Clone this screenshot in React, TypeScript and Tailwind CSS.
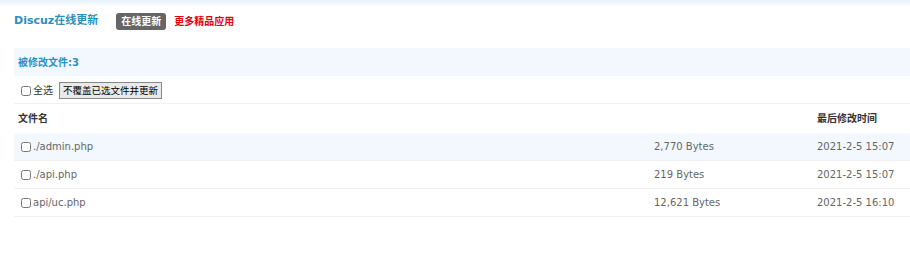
const files = [
  { name: './admin.php', size: '2,770 Bytes', time: '2021-2-5 15:07', hover: true },
  { name: './api.php', size: '219 Bytes', time: '2021-2-5 15:07', hover: false },
  { name: 'api/uc.php', size: '12,621 Bytes', time: '2021-2-5 16:10', hover: false },
];

export default function App() {
  return (
    <div
      className="h-[253px] w-[910px] overflow-hidden bg-white text-[10px] text-[#666]"
      style={{ fontFamily: '"DejaVu Sans", Verdana, "Noto Sans CJK SC", sans-serif' }}
    >
      <div className="h-[7px] bg-gradient-to-b from-[#e6f1fa] to-white" />
      <div className="flex items-center pl-[14px] pt-[6px]">
        <h3 className="text-[11px] font-bold text-[#2a8fc1]">Discuz在线更新</h3>
        <span className="ml-[18px] rounded-[3px] bg-[#666] px-[5px] py-[1px] font-bold text-white">在线更新</span>
        <a className="ml-[8px] font-bold text-[#e4000f]">更多精品应用</a>
      </div>

      <div className="ml-[14px] mt-[18px]">
        <div className="flex h-[28px] items-center bg-[#f2f8fd] pl-[4px] font-bold text-[#2a8fc1]">被修改文件:3</div>
        <div className="flex h-[28px] items-center gap-[2px] border-b border-[#eef1f3] pl-[7px] pt-[2px] text-[#333]">
          <input type="checkbox" className="m-0 h-[10px] w-[10px]" />
          <span>全选</span>
          <button
            type="button"
            className="ml-[4px] h-[17px] border border-[#888] bg-[#e9e9e9] px-[3px] text-[9.5px] leading-none text-black"
          >
            不覆盖已选文件并更新
          </button>
        </div>
        <div className="flex h-[29px] items-end pb-[7px] font-bold text-[#333]">
          <span className="pl-[4px]">文件名</span>
          <span className="ml-auto w-[93px]">最后修改时间</span>
        </div>
        {files.map((f) => (
          <div
            key={f.name}
            className={`flex h-[28px] items-center border-b border-[#f0f1f2] ${f.hover ? 'bg-[#f2f8fd]' : ''}`}
          >
            <div className="flex flex-1 items-center gap-[2px] pl-[7px]">
              <input type="checkbox" className="m-0 h-[10px] w-[10px]" />
              <span>{f.name}</span>
            </div>
            <span className="w-[163px]">{f.size}</span>
            <span className="w-[93px]">{f.time}</span>
          </div>
        ))}
      </div>
    </div>
  );
}
